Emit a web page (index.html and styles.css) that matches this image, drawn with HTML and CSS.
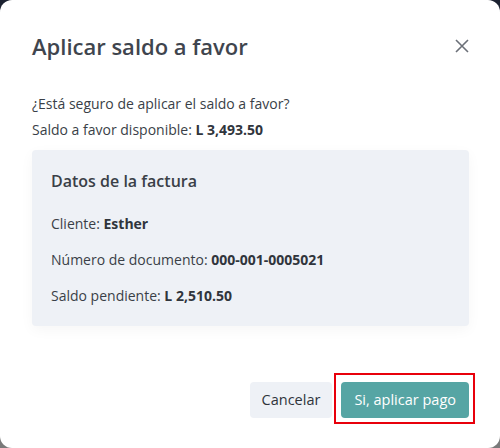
FILE: index.html
```html
<html>
<head>
	<title>Aplicar saldo a favor</title>
	<link rel="stylesheet" href="styles.css">
</head>
<body>
<div class="modal">
	<div class="modal-header">
		<h2 class="modal-title">Aplicar saldo a favor</h2>
		<span class="close">
			<svg width="14" height="14" viewBox="0 0 14 14"><path d="M1 1L13 13M13 1L1 13" stroke="#6b7078" stroke-width="1.6" fill="none"/></svg>
		</span>
	</div>
	<div class="modal-body">
		<p>¿Está seguro de aplicar el saldo a favor?</p>
		<p>Saldo a favor disponible: <b>L 3,493.50</b></p>
		<div class="card">
			<h3>Datos de la factura</h3>
			<p class="row">Cliente: <b>Esther</b></p>
			<p class="row">Número de documento: <b>000-001-0005021</b></p>
			<p class="row">Saldo pendiente: <b>L 2,510.50</b></p>
		</div>
	</div>
	<div class="modal-footer">
		<a class="btn btn-light">Cancelar</a>
		<div class="mark">
			<a class="btn btn-primary">Si, aplicar pago</a>
		</div>
	</div>
</div>
</body>
</html>
```

FILE: styles.css
```css
body, html {
	height: 100%;
	margin: 0;
}
body {
	background: linear-gradient(#1b2130, #5a5d63 60%, #7a7a7a);
	font-family: "Open Sans", "Liberation Sans", sans-serif;
	color: #3a3f47;
}

.modal {
	height: 100%;
	box-sizing: border-box;
	background: #fff;
	border-radius: 12px;
	padding: 32px 31px 30px 32px;
	display: flex;
	flex-direction: column;
}

.modal-header {
	display: flex;
	justify-content: space-between;
	align-items: center;
	height: 28px;
}
.modal-title {
	margin: 0;
	font-size: 22px;
	font-weight: 600;
	color: #3f454e;
	line-height: 28px;
}
.close {
	display: flex;
}

.modal-body {
	padding-top: 34px;
	flex: 1;
}
.modal-body p {
	margin: 0 0 6px;
	font-size: 14px;
	line-height: 20px;
}
b {
	font-weight: 700;
	color: #30353c;
}

.card {
	margin-top: 10px;
	background: #eef1f6;
	border-radius: 4px;
	padding: 20px 19px 20px 19px;
	box-shadow: 0 4px 14px rgba(0, 0, 0, 0.04);
}
.card h3 {
	margin: 0 0 22px;
	font-size: 16px;
	font-weight: 600;
	line-height: 22px;
	color: #3a3f47;
}
.card .row {
	margin: 0 0 16px;
}
.card .row:last-child {
	margin-bottom: 0;
}

.modal-footer {
	display: flex;
	justify-content: flex-end;
	gap: 9px;
}
.btn {
	display: block;
	height: 36px;
	line-height: 36px;
	border-radius: 4px;
	font-size: 14.5px;
	font-weight: 500;
	padding: 0 12px;
}
.btn-light {
	background: #eef1f6;
	color: #2f343b;
}
.btn-primary {
	background: #56a5a4;
	color: #fff;
	padding: 0 13px;
}
.mark {
	border: 2px solid #e8000b;
	padding: 7px 4px 4px 5px;
	margin: -9px -6px -6px -7px;
}
```
